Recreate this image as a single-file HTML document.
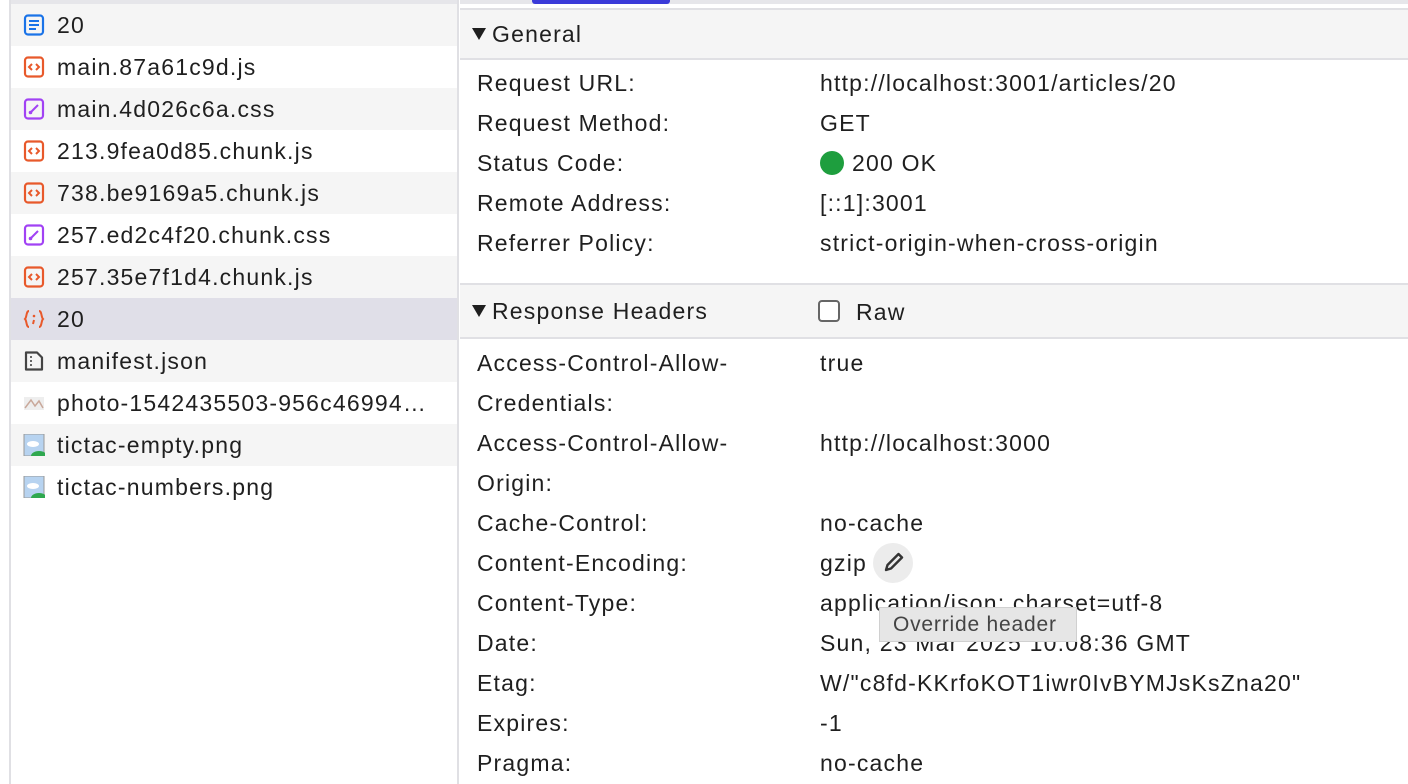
<!DOCTYPE html>
<html><head><style>
*{margin:0;padding:0;box-sizing:border-box}
body{width:1408px;height:784px;overflow:hidden;background:#fff;font-family:"Liberation Sans",sans-serif;font-size:23px;letter-spacing:1.2px;color:#1f1f1f;position:relative}
#left{position:absolute;left:9px;top:0;width:450px;height:784px;border-left:2px solid #e0e0e4;border-right:2px solid #e0e0e4;overflow:hidden}
#left .top{height:4px;background:#e6e6ea}
.row{height:42px;display:flex;align-items:center;padding-left:12px;white-space:nowrap}
.row.g{background:#f5f5f5}
.row.sel{background:#e0dfe8}
.ic{width:22px;height:22px;margin-right:12px;flex:none}
#right{position:absolute;left:460px;top:0;right:0;height:784px}
.strip{height:4px;background:#e6e6ea;position:relative}
.strip .tab{position:absolute;left:72px;width:138px;top:0;height:4px;background:#3b3bd9;border-radius:0 0 3px 3px}
.hdr{background:#f5f5f5;height:50px;display:flex;align-items:center;padding-left:10px;border-top:2px solid #e0e0e4;border-bottom:2px solid #e0e0e4;position:relative}
.tri{display:inline-block;width:0;height:0;border-left:7px solid transparent;border-right:7px solid transparent;border-top:12px solid #1f1f1f;margin:0 6px 0 2px}
.kv{position:relative;height:40px;line-height:40px}
.kv .k{position:absolute;left:17px}
.kv .v{position:absolute;left:360px}
</style></head><body>
<div id="left">
<div class="top"></div>
<div class="row g"><svg class="ic" viewBox="0 0 22 22"><rect x="2" y="1.5" width="18" height="19" rx="3" fill="none" stroke="#1a73e8" stroke-width="2.2"/><path d="M6 7h10M6 11h10M6 15h7" stroke="#1a73e8" stroke-width="2"/></svg>20</div>
<div class="row"><svg class="ic" viewBox="0 0 22 22"><rect x="2" y="1.5" width="18" height="19" rx="3" fill="none" stroke="#e8592b" stroke-width="2.2"/><path d="M9 8l-3 3 3 3M13 8l3 3-3 3" fill="none" stroke="#e8592b" stroke-width="2"/></svg>main.87a61c9d.js</div>
<div class="row g"><svg class="ic" viewBox="0 0 22 22"><rect x="2" y="1.5" width="18" height="19" rx="3" fill="none" stroke="#a142f4" stroke-width="2.2"/><path d="M15 7l-7 7" stroke="#a142f4" stroke-width="2"/><circle cx="7.5" cy="14.5" r="1.8" fill="#a142f4"/></svg>main.4d026c6a.css</div>
<div class="row"><svg class="ic" viewBox="0 0 22 22"><rect x="2" y="1.5" width="18" height="19" rx="3" fill="none" stroke="#e8592b" stroke-width="2.2"/><path d="M9 8l-3 3 3 3M13 8l3 3-3 3" fill="none" stroke="#e8592b" stroke-width="2"/></svg>213.9fea0d85.chunk.js</div>
<div class="row g"><svg class="ic" viewBox="0 0 22 22"><rect x="2" y="1.5" width="18" height="19" rx="3" fill="none" stroke="#e8592b" stroke-width="2.2"/><path d="M9 8l-3 3 3 3M13 8l3 3-3 3" fill="none" stroke="#e8592b" stroke-width="2"/></svg>738.be9169a5.chunk.js</div>
<div class="row"><svg class="ic" viewBox="0 0 22 22"><rect x="2" y="1.5" width="18" height="19" rx="3" fill="none" stroke="#a142f4" stroke-width="2.2"/><path d="M15 7l-7 7" stroke="#a142f4" stroke-width="2"/><circle cx="7.5" cy="14.5" r="1.8" fill="#a142f4"/></svg>257.ed2c4f20.chunk.css</div>
<div class="row g"><svg class="ic" viewBox="0 0 22 22"><rect x="2" y="1.5" width="18" height="19" rx="3" fill="none" stroke="#e8592b" stroke-width="2.2"/><path d="M9 8l-3 3 3 3M13 8l3 3-3 3" fill="none" stroke="#e8592b" stroke-width="2"/></svg>257.35e7f1d4.chunk.js</div>
<div class="row sel"><svg class="ic" viewBox="0 0 22 22"><path d="M6 3C3 3 4 9 2 11c2 2 1 8 4 8M16 3c3 0 2 6 4 8-2 2-1 8-4 8" fill="none" stroke="#e8592b" stroke-width="2"/><circle cx="11" cy="8" r="1.3" fill="#e8592b"/><path d="M11 12l-1 4" stroke="#e8592b" stroke-width="2"/></svg>20</div>
<div class="row g"><svg class="ic" viewBox="0 0 22 22"><path d="M3 2.5h11l5 5v12H3z" fill="none" stroke="#444" stroke-width="2.2" stroke-linejoin="round"/><path d="M8 6v2M8 10v2M8 14v2" stroke="#444" stroke-width="1.6"/></svg>manifest.json</div>
<div class="row"><svg class="ic" viewBox="0 0 22 22"><rect x="1" y="5" width="20" height="13" fill="#eee"/><path d="M2 16l6-8 4 6 4-5 4 7" fill="none" stroke="#c9a89a" stroke-width="1.5"/></svg>photo-1542435503-956c46994…</div>
<div class="row g"><svg class="ic" viewBox="0 0 22 22"><rect x="1" y="0" width="20" height="22" fill="#b7d3f0" stroke="#999" stroke-width="1"/><ellipse cx="10" cy="10" rx="6" ry="3" fill="#fff"/><ellipse cx="16" cy="22" rx="8" ry="5" fill="#2fa84f"/></svg>tictac-empty.png</div>
<div class="row"><svg class="ic" viewBox="0 0 22 22"><rect x="1" y="0" width="20" height="22" fill="#b7d3f0" stroke="#999" stroke-width="1"/><ellipse cx="10" cy="10" rx="6" ry="3" fill="#fff"/><ellipse cx="16" cy="22" rx="8" ry="5" fill="#2fa84f"/></svg>tictac-numbers.png</div>
</div>
<div id="right">
<div class="strip"><div class="tab"></div></div>
<div style="height:4px"></div>
<div class="hdr" style="height:52px"><span class="tri"></span>General</div>
<div style="height:3px"></div>
<div class="kv"><span class="k">Request URL:</span><span class="v">http://localhost:3001/articles/20</span></div>
<div class="kv"><span class="k">Request Method:</span><span class="v">GET</span></div>
<div class="kv"><span class="k">Status Code:</span><span class="v"><span style="display:inline-block;width:24px;height:24px;border-radius:50%;background:#1e9e3e;vertical-align:-4px;margin-right:8px"></span>200 OK</span></div>
<div class="kv"><span class="k">Remote Address:</span><span class="v">[::1]:3001</span></div>
<div class="kv"><span class="k">Referrer Policy:</span><span class="v">strict-origin-when-cross-origin</span></div>
<div style="height:20px"></div>
<div class="hdr" style="height:56px"><span class="tri"></span>Response Headers<span style="position:absolute;left:358px;top:15px;width:22px;height:22px;border:2px solid #666;border-radius:4px;background:#fff"></span><span style="position:absolute;left:396px;top:14px">Raw</span></div>
<div style="height:4px"></div>
<div class="kv"><span class="k">Access-Control-Allow-</span><span class="v">true</span></div>
<div class="kv"><span class="k">Credentials:</span></div>
<div class="kv"><span class="k">Access-Control-Allow-</span><span class="v">http://localhost:3000</span></div>
<div class="kv"><span class="k">Origin:</span></div>
<div class="kv"><span class="k">Cache-Control:</span><span class="v">no-cache</span></div>
<div class="kv"><span class="k">Content-Encoding:</span><span class="v">gzip<span style="display:inline-block;width:40px;height:40px;border-radius:50%;background:#ececec;vertical-align:middle;position:relative;top:-2px;margin-left:6px"><svg width="40" height="40" viewBox="0 0 40 40"><path d="M13 27l1.5-5 11-11 3.5 3.5-11 11z" fill="none" stroke="#333" stroke-width="2.4" stroke-linejoin="round"/></svg></span></span></div>
<div class="kv"><span class="k">Content-Type:</span><span class="v">application/json; charset=utf-8</span></div>
<div class="kv"><span class="k">Date:</span><span class="v">Sun, 23 Mar 2025 10:08:36 GMT</span></div>
<div class="kv"><span class="k">Etag:</span><span class="v">W/"c8fd-KKrfoKOT1iwr0IvBYMJsKsZna20"</span></div>
<div class="kv"><span class="k">Expires:</span><span class="v">-1</span></div>
<div class="kv"><span class="k">Pragma:</span><span class="v">no-cache</span></div>
<div style="position:absolute;left:419px;top:607px;height:35px;width:198px;background:#e6e6e6;border:1px solid #d0d0d0;color:#444;font-size:21px;letter-spacing:0.8px;line-height:33px;padding-left:13px;white-space:nowrap">Override header</div>
</div>
</body></html>
